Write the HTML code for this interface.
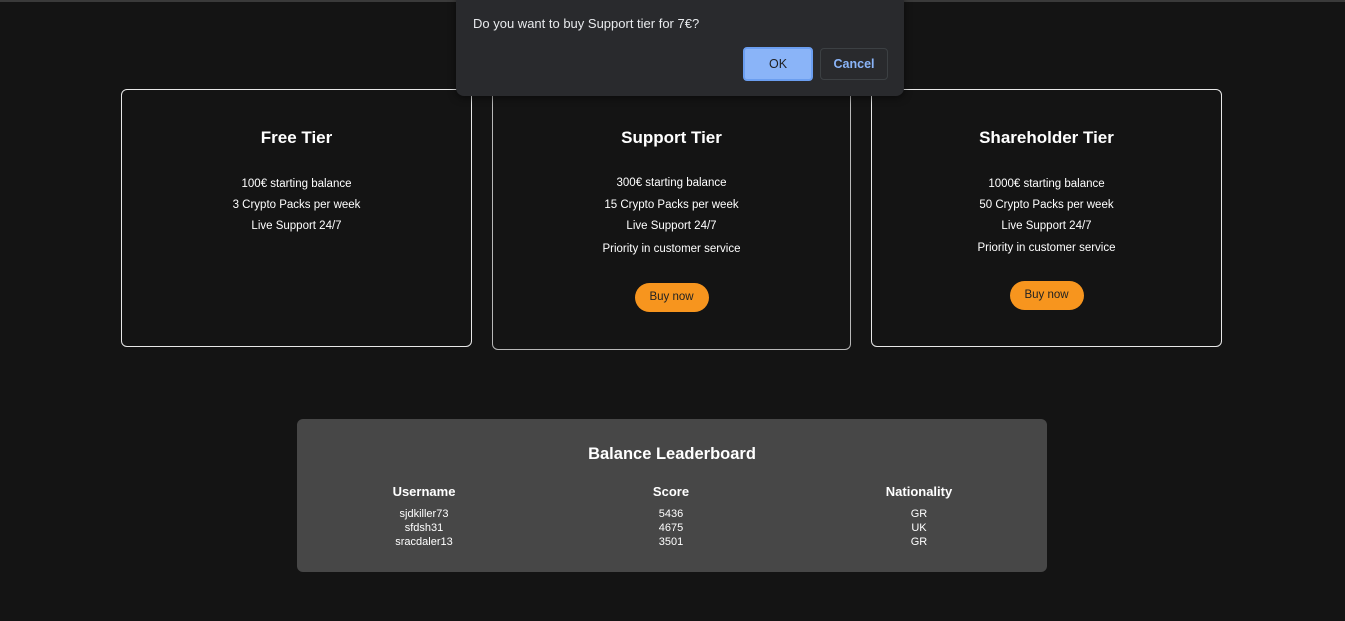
<!DOCTYPE html>
<html><head><meta charset="utf-8"><style>
*{margin:0;padding:0;box-sizing:border-box}
body{width:1345px;height:621px;background:#141414;font-family:"Liberation Sans",sans-serif;color:#fff;position:relative;overflow:hidden}
.top{position:absolute;left:0;top:0;width:1345px;height:2px;background:#3a3a3a}
.card{position:absolute;border:1px solid #e8e8e8;border-radius:6px;text-align:center}
.card h2{font-size:17px;font-weight:bold;position:absolute;width:100%;top:38px}
.card .l{position:absolute;width:100%;font-size:11.5px}
.btn{position:absolute;left:50%;transform:translateX(-50%);background:#f7951e;color:#222;border-radius:15px;font-size:11.5px;line-height:29px;height:29px;width:74px}
.dlg{position:absolute;left:456px;top:-6px;width:448px;height:102px;background:#292a2d;border-radius:8px;box-shadow:0 2px 8px rgba(0,0,0,.5)}
.dlg p{position:absolute;left:17px;top:22px;font-size:13px;color:#e8eaed}
.ok{position:absolute;left:287px;top:53px;width:70px;height:34px;background:#8ab4f8;border:2px solid #6b9ef0;border-radius:4px;color:#202124;font-size:12.5px;text-align:center;line-height:30px}
.cn{position:absolute;left:364px;top:54px;width:68px;height:32px;border:1px solid #3c4043;border-radius:4px;color:#8ab4f8;font-size:12.5px;text-align:center;line-height:30px;font-weight:bold}
.lb{position:absolute;left:297px;top:419px;width:750px;height:153px;background:#474747;border-radius:6px}
.lb h3{position:absolute;width:100%;text-align:center;top:26px;font-size:16.5px}
.col{position:absolute;top:66px;width:160px;text-align:center;font-size:11px;line-height:14px}
.col b{display:block;font-size:13px;margin-bottom:8px}
</style></head><body>
<div class="top"></div>
<div class="card" style="left:121px;top:89px;width:351px;height:258px">
<h2>Free Tier</h2>
<div class="l" style="top:88px">100€ starting balance</div>
<div class="l" style="top:109px">3 Crypto Packs per week</div>
<div class="l" style="top:130px">Live Support 24/7</div>
</div>
<div class="card" style="left:492px;top:89px;width:359px;height:261px;border-color:#b8b8b8">
<h2>Support Tier</h2>
<div class="l" style="top:87px">300€ starting balance</div>
<div class="l" style="top:109px">15 Crypto Packs per week</div>
<div class="l" style="top:130px">Live Support 24/7</div>
<div class="l" style="top:153px">Priority in customer service</div>
<div class="btn" style="top:193px">Buy now</div>
</div>
<div class="card" style="left:871px;top:89px;width:351px;height:258px">
<h2>Shareholder Tier</h2>
<div class="l" style="top:88px">1000€ starting balance</div>
<div class="l" style="top:109px">50 Crypto Packs per week</div>
<div class="l" style="top:130px">Live Support 24/7</div>
<div class="l" style="top:152px">Priority in customer service</div>
<div class="btn" style="top:191px">Buy now</div>
</div>
<div class="dlg">
<p>Do you want to buy Support tier for 7€?</p>
<div class="ok">OK</div>
<div class="cn">Cancel</div>
</div>
<div class="lb">
<h3>Balance Leaderboard</h3>
<div class="col" style="left:47px"><b>Username</b>sjdkiller73<br>sfdsh31<br>sracdaler13</div>
<div class="col" style="left:294px"><b>Score</b>5436<br>4675<br>3501</div>
<div class="col" style="left:542px"><b>Nationality</b>GR<br>UK<br>GR</div>
</div>
</body></html>
